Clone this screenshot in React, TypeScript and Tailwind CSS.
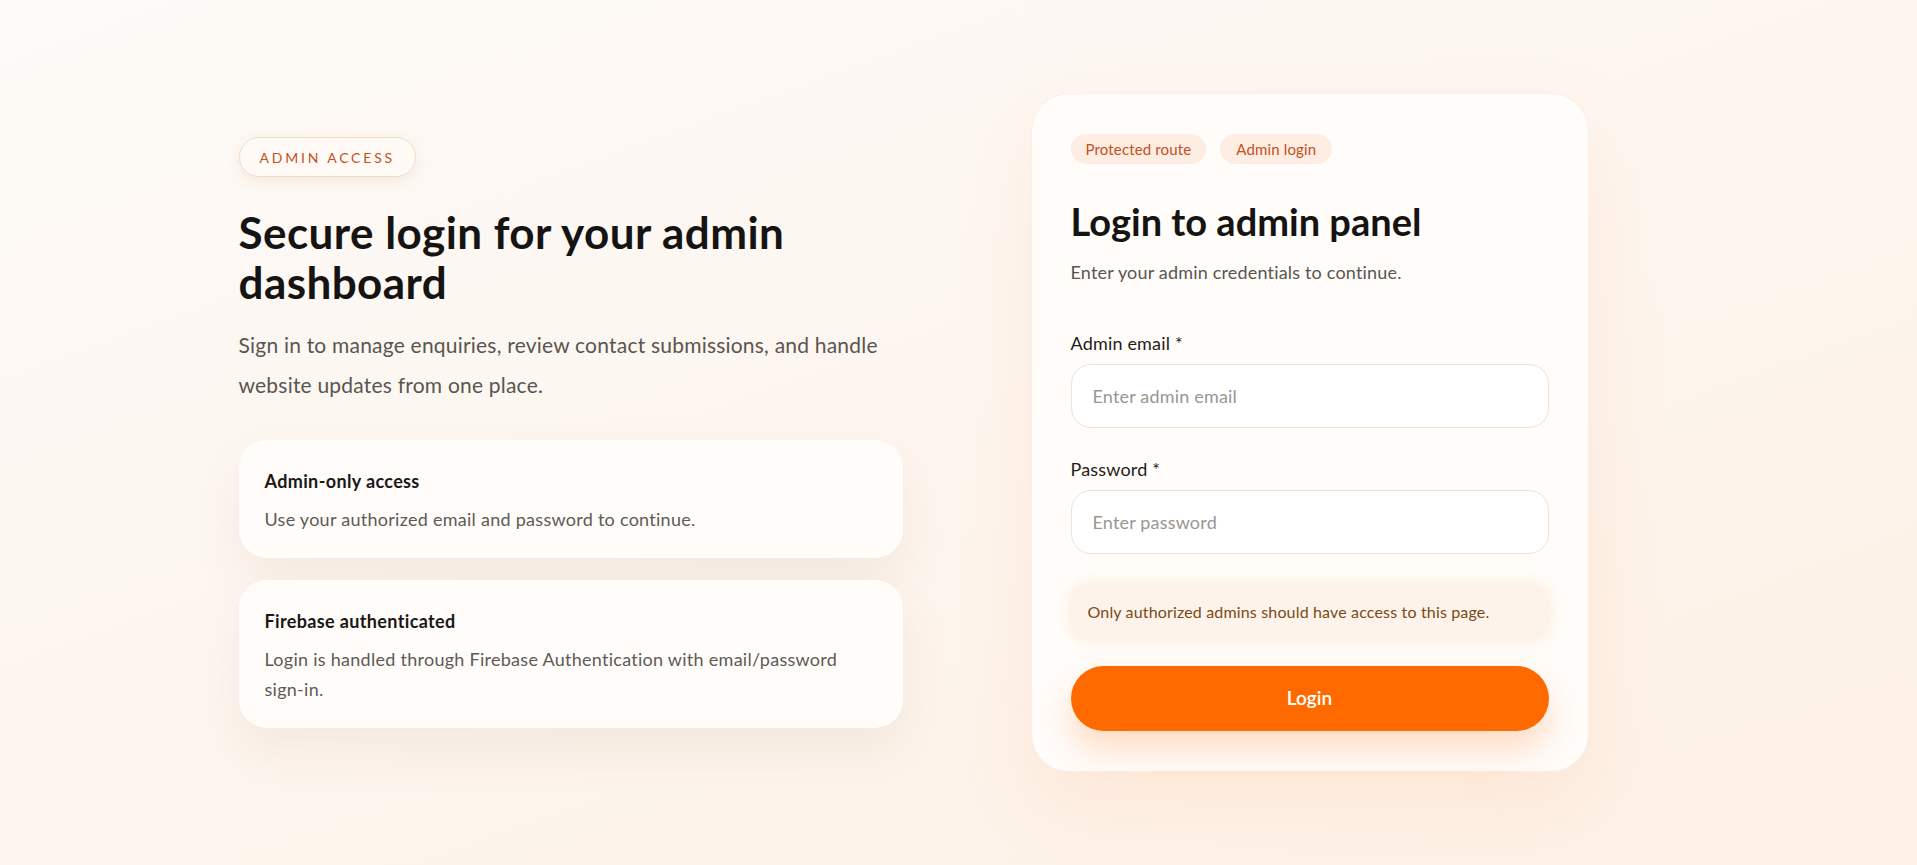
import React from 'react';

const features = [
  {
    title: 'Admin-only access',
    body: 'Use your authorized email and password to continue.',
  },
  {
    title: 'Firebase authenticated',
    body: 'Login is handled through Firebase Authentication with email/password sign-in.',
  },
];

const App: React.FC = () => {
  return (
    <div className="min-h-screen w-full bg-[linear-gradient(160deg,#fdfaf7_0%,#fdf6f0_45%,#fdf0e4_100%)] font-['Lato',sans-serif] text-[#161412]">
      <div className="mx-auto flex min-h-screen max-w-[1440px] items-center">
        {/* left: intro */}
        <div className="w-[664px] shrink-0">
          <span className="inline-flex h-10 items-center rounded-full border border-[#f3dcc8] bg-[#fffaf6] px-[20px] text-[14px] tracking-[0.2em] text-[#c4501e] shadow-[0_4px_14px_rgba(200,120,60,0.12)]">
            ADMIN ACCESS
          </span>
          <h1 className="mt-[30px] text-[44px] font-bold leading-[50px] tracking-[0.01em] text-[#161412]">
            Secure login for your admin dashboard
          </h1>
          <p className="mt-[18px] max-w-[650px] text-[21px] leading-[40px] tracking-[0.01em] text-[#5a5550]">
            Sign in to manage enquiries, review contact submissions, and handle website updates from one place.
          </p>

          <div className="mt-[35px] flex flex-col gap-[22px]">
            {features.map((f) => (
              <div
                key={f.title}
                className="rounded-[28px] bg-[#fffcfa] px-[26px] pb-[24px] pt-[28px] shadow-[0_22px_50px_rgba(140,90,50,0.08)]"
              >
                <h3 className="text-[18px] font-bold leading-[26px] tracking-[0.02em] text-[#1a1816]">{f.title}</h3>
                <p className="mt-[10px] text-[18px] leading-[30px] tracking-[0.015em] text-[#5f5a55]">{f.body}</p>
              </div>
            ))}
          </div>
        </div>

        {/* right: login card */}
        <div className="ml-[128px] w-[558px] shrink-0 rounded-[38px] border border-[#fbefe5] bg-[#fffcf9] px-[39px] pb-[40px] pt-[40px] shadow-[0_30px_80px_rgba(255,150,80,0.12)]">
          <div className="flex gap-[14px]">
            <span className="inline-flex h-[30px] items-center rounded-full bg-[#fdede2] px-[15px] text-[15px] tracking-[0.01em] text-[#c4501e]">
              Protected route
            </span>
            <span className="inline-flex h-[30px] items-center rounded-full bg-[#fdede2] px-[16px] text-[15px] tracking-[0.01em] text-[#c4501e]">
              Admin login
            </span>
          </div>

          <h2 className="mt-[34px] text-[38px] font-bold leading-[46px] tracking-normal text-[#161412]">
            Login to admin panel
          </h2>
          <p className="mt-[14px] text-[18px] leading-[28px] tracking-[0.01em] text-[#5a5550]">
            Enter your admin credentials to continue.
          </p>

          <form className="mt-[44px]" onSubmit={(e) => e.preventDefault()}>
            <label className="block text-[18px] leading-[26px] tracking-[0.01em] text-[#1f1d1b]">Admin email *</label>
            <input
              type="email"
              placeholder="Enter admin email"
              className="mt-2 h-[64px] w-full rounded-[20px] border border-[#ece2d8] bg-white px-[21px] text-[18px] tracking-[0.01em] text-[#1f1d1b] outline-none placeholder:text-[#9a9691]"
            />

            <label className="mt-[28px] block text-[18px] leading-[26px] tracking-[0.01em] text-[#1f1d1b]">Password *</label>
            <input
              type="password"
              placeholder="Enter password"
              className="mt-2 h-[64px] w-full rounded-[20px] border border-[#ece2d8] bg-white px-[21px] text-[18px] tracking-[0.01em] text-[#1f1d1b] outline-none placeholder:text-[#9a9691]"
            />

            <div className="mt-[30px] rounded-[18px] bg-[#fdf3ea] px-[17px] py-[17px] text-[16px] leading-[22px] tracking-[0.01em] text-[#7a4a16] shadow-[0_0_14px_rgba(252,232,214,0.9)]">
              Only authorized admins should have access to this page.
            </div>

            <button
              type="submit"
              className="mt-[26px] h-[65px] w-full rounded-full bg-[#ff6a00] text-[19px] font-semibold text-white shadow-[0_18px_34px_rgba(255,106,0,0.22)]"
            >
              Login
            </button>
          </form>
        </div>
      </div>
    </div>
  );
};

export default App;
